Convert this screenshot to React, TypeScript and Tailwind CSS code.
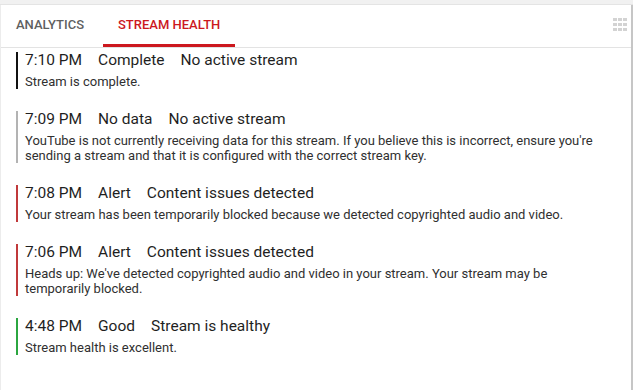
import React from 'react';

type Status = 'complete' | 'nodata' | 'alert' | 'good';

interface HealthEvent {
  time: string;
  label: string;
  title: string;
  message: string;
  status: Status;
}

const BAR_COLORS: Record<Status, string> = {
  complete: 'border-[#111111]',
  nodata: 'border-[#b3b3b3]',
  alert: 'border-[#c0393b]',
  good: 'border-[#2ba640]',
};

const EVENTS: HealthEvent[] = [
  { time: '7:10 PM', label: 'Complete', title: 'No active stream', message: 'Stream is complete.', status: 'complete' },
  {
    time: '7:09 PM',
    label: 'No data',
    title: 'No active stream',
    message:
      "YouTube is not currently receiving data for this stream. If you believe this is incorrect, ensure you're sending a stream and that it is configured with the correct stream key.",
    status: 'nodata',
  },
  {
    time: '7:08 PM',
    label: 'Alert',
    title: 'Content issues detected',
    message: 'Your stream has been temporarily blocked because we detected copyrighted audio and video.',
    status: 'alert',
  },
  {
    time: '7:06 PM',
    label: 'Alert',
    title: 'Content issues detected',
    message: "Heads up: We've detected copyrighted audio and video in your stream. Your stream may be temporarily blocked.",
    status: 'alert',
  },
  { time: '4:48 PM', label: 'Good', title: 'Stream is healthy', message: 'Stream health is excellent.', status: 'good' },
];

const GripIcon = () => (
  <svg width="14" height="14" viewBox="0 0 14 14" fill="#d3d3d3">
    {[0, 5, 10].map((y) =>
      [0, 5, 10].map((x) => <rect key={`${x}-${y}`} x={x} y={y + 1} width="4" height="3" />)
    )}
  </svg>
);

export default function App() {
  return (
    <div className="flex h-[390px] w-[633px] flex-col overflow-hidden bg-white font-['Roboto',sans-serif]">
      <div className="h-[5px] shrink-0 border-b border-[#e4e4e4] bg-[#f1f1f1]" />
      <div className="flex flex-1 overflow-hidden">
        <div className="flex flex-1 flex-col border-l border-[#ececec]">
          <div className="flex h-[43px] shrink-0 items-stretch border-b border-[#e3e3e3]">
            <button className="flex items-center px-[15px] pb-[3px] text-[13px] font-medium uppercase text-[#5f5f5f]">
              Analytics
            </button>
            <button className="ml-1 flex items-center border-b-[3px] border-[#cc181e] px-[15px] text-[13px] font-medium uppercase text-[#cc181e]">
              Stream health
            </button>
            <div className="ml-auto flex items-center pr-[4px] pb-[4px]">
              <GripIcon />
            </div>
          </div>

          <div className="flex flex-col gap-[22px] pl-[15px] pt-[4px]">
            {EVENTS.map((ev, i) => (
              <div key={i} className={`border-l-2 pl-[7px] ${BAR_COLORS[ev.status]}`}>
                <div className="flex gap-[16px] text-[15.5px] leading-[17px] text-[#1f1f1f]">
                  <span>{ev.time}</span>
                  <span>{ev.label}</span>
                  <span>{ev.title}</span>
                </div>
                <p className="mt-[5px] w-[575px] text-[13px] leading-[15px] text-[#303030]">{ev.message}</p>
              </div>
            ))}
          </div>
        </div>
        <div className="w-[2px] shrink-0 bg-[#c6c6c6]" />
      </div>
    </div>
  );
}
